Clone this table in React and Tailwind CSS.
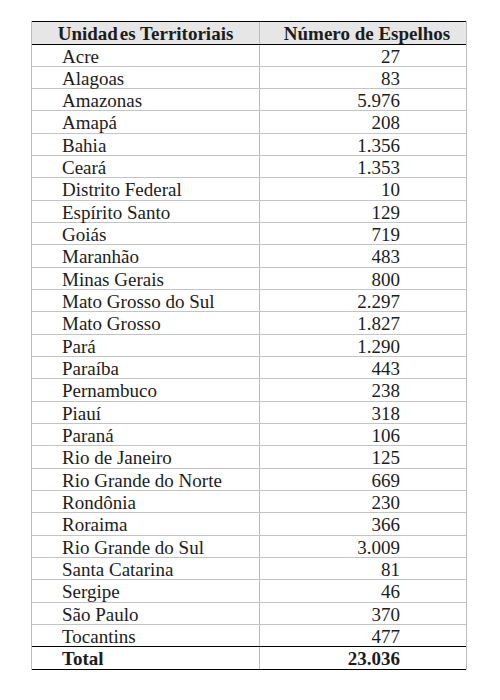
import React from 'react';

const rows = [
  ['Acre', '27'],
  ['Alagoas', '83'],
  ['Amazonas', '5.976'],
  ['Amapá', '208'],
  ['Bahia', '1.356'],
  ['Ceará', '1.353'],
  ['Distrito Federal', '10'],
  ['Espírito Santo', '129'],
  ['Goiás', '719'],
  ['Maranhão', '483'],
  ['Minas Gerais', '800'],
  ['Mato Grosso do Sul', '2.297'],
  ['Mato Grosso', '1.827'],
  ['Pará', '1.290'],
  ['Paraíba', '443'],
  ['Pernambuco', '238'],
  ['Piauí', '318'],
  ['Paraná', '106'],
  ['Rio de Janeiro', '125'],
  ['Rio Grande do Norte', '669'],
  ['Rondônia', '230'],
  ['Roraima', '366'],
  ['Rio Grande do Sul', '3.009'],
  ['Santa Catarina', '81'],
  ['Sergipe', '46'],
  ['São Paulo', '370'],
  ['Tocantins', '477'],
];

export default function App() {
  return (
    <div className="w-[500px] h-[700px] bg-white pt-[21px] pl-[31px] [font-family:'Liberation_Serif',serif] text-[19px] text-[#1c1c1c]">
      <div className="w-[436px] border-x border-[#bdbdbd]">
        {/* header */}
        <div className="flex h-[23.5px] bg-[#e6e6e6] border-y border-black font-bold leading-[21px]">
          <div className="w-[228px] border-r border-[#bdbdbd] text-center pt-[1px]">
            Unidad<span className="ml-[2px]">es</span> Territoriais
          </div>
          <div className="flex-1 text-center pt-[1px] pl-[8px]">Número de Espelhos</div>
        </div>

        {rows.map(([name, n], i) => (
          <div
            key={name}
            className={`flex h-[22.33px] border-b leading-[21px] ${i === rows.length - 1 ? 'border-black' : 'border-[#c4c4c4]'}`}
          >
            <div className="w-[228px] border-r border-[#bdbdbd] pl-[30px] pt-[1px]">{name}</div>
            <div className="flex-1 text-right pr-[66px] pt-[1px]">{n}</div>
          </div>
        ))}

        {/* total */}
        <div className="flex h-[22.5px] border-b border-black font-bold leading-[21px]">
          <div className="w-[228px] border-r border-[#bdbdbd] pl-[30px] pt-[1px]">Total</div>
          <div className="flex-1 text-right pr-[66px] pt-[1px]">23.036</div>
        </div>
      </div>
    </div>
  );
}
